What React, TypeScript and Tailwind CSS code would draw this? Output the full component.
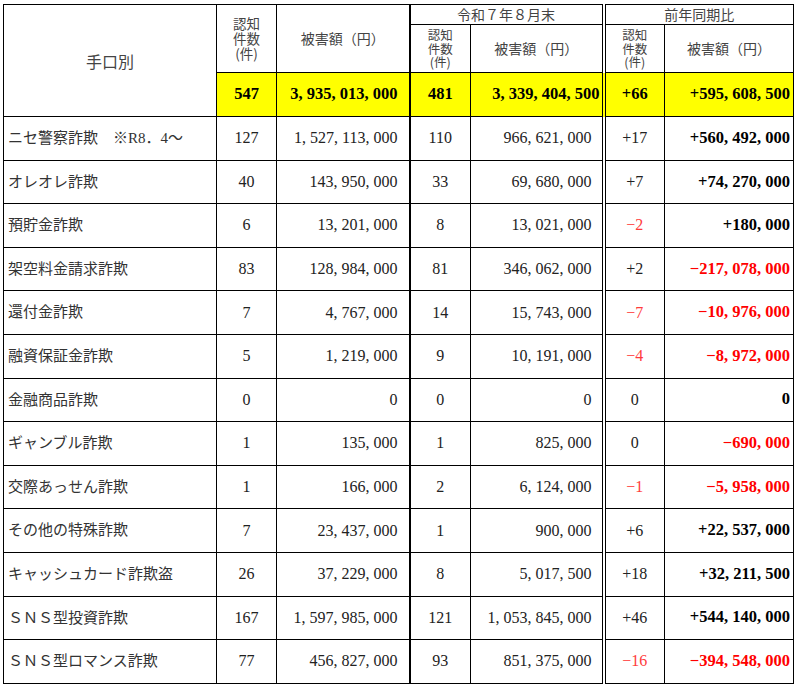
import React from "react";

type Row = [string, string, string, string, string, string, string];

const rows: Row[] = [
  ["ニセ警察詐欺　※R8．4～", "127", "1,527,113,000", "110", "966,621,000", "+17", "+560,492,000"],
  ["オレオレ詐欺", "40", "143,950,000", "33", "69,680,000", "+7", "+74,270,000"],
  ["預貯金詐欺", "6", "13,201,000", "8", "13,021,000", "−2", "+180,000"],
  ["架空料金請求詐欺", "83", "128,984,000", "81", "346,062,000", "+2", "−217,078,000"],
  ["還付金詐欺", "7", "4,767,000", "14", "15,743,000", "−7", "−10,976,000"],
  ["融資保証金詐欺", "5", "1,219,000", "9", "10,191,000", "−4", "−8,972,000"],
  ["金融商品詐欺", "0", "0", "0", "0", "0", "0"],
  ["ギャンブル詐欺", "1", "135,000", "1", "825,000", "0", "−690,000"],
  ["交際あっせん詐欺", "1", "166,000", "2", "6,124,000", "−1", "−5,958,000"],
  ["その他の特殊詐欺", "7", "23,437,000", "1", "900,000", "+6", "+22,537,000"],
  ["キャッシュカード詐欺盗", "26", "37,229,000", "8", "5,017,500", "+18", "+32,211,500"],
  ["ＳＮＳ型投資詐欺", "167", "1,597,985,000", "121", "1,053,845,000", "+46", "+544,140,000"],
  ["ＳＮＳ型ロマンス詐欺", "77", "456,827,000", "93", "851,375,000", "−16", "−394,548,000"],
];

// "1,527,113,000" -> "1, 527, 113, 000"
const fmt = (s: string) => s.replace(/,/g, ", ");
const neg = (s: string) => s.startsWith("−");

const cell = "border border-black p-0";
const num = "font-['Liberation_Serif',serif] text-[16px] text-[#222]";
const bold = "font-['Liberation_Serif',serif] text-[16.5px] font-bold";
const head = "font-['Noto_Sans_CJK_JP',sans-serif] text-[#444]";

function CountHead({ small }: { small?: boolean }) {
  return (
    <div className={`${head} ${small ? "text-[12.5px] leading-[13.5px]" : "text-[13.5px] leading-[15px]"}`}>
      <div>認知</div>
      <div>件数</div>
      <div>(件)</div>
    </div>
  );
}

export default function App() {
  return (
    <div className="bg-white min-h-screen pl-[3px] pt-[4px]">
      <table className="border-collapse border border-black table-fixed w-[790px]">
        <colgroup>
          <col className="w-[213px]" />
          <col className="w-[60px]" />
          <col className="w-[133px]" />
          <col className="w-[61px]" />
          <col className="w-[133px]" />
          <col className="w-[61px]" />
          <col className="w-[129px]" />
        </colgroup>
        <thead>
          <tr className="h-[20px]">
            <th rowSpan={3} className={`${cell} ${head} text-[16px] font-normal text-center`}>
              手口別
            </th>
            <th rowSpan={2} className={`${cell} font-normal text-center`}>
              <CountHead />
            </th>
            <th rowSpan={2} className={`${cell} ${head} text-[14px] font-normal text-center`}>
              被害額（円）
            </th>
            <th colSpan={2} className={`${cell} border-l-2 ${head} text-[14px] font-normal leading-[19px]`}>
              令和７年８月末
            </th>
            <th colSpan={2} className={`${cell} border-l-[4px] border-double ${head} text-[14px] font-normal leading-[19px]`}>
              前年同期比
            </th>
          </tr>
          <tr className="h-[48px]">
            <th className={`${cell} border-l-2 font-normal text-center`}>
              <CountHead small />
            </th>
            <th className={`${cell} ${head} text-[14px] font-normal text-center`}>被害額（円）</th>
            <th className={`${cell} border-l-[4px] border-double font-normal text-center`}>
              <CountHead small />
            </th>
            <th className={`${cell} ${head} text-[14px] font-normal text-center`}>被害額（円）</th>
          </tr>
          <tr className="h-[44px] bg-[#ffff00]">
            <td className={`${cell} ${bold} text-center`}>547</td>
            <td className={`${cell} ${bold} text-right pr-[11px]`}>{fmt("3,935,013,000")}</td>
            <td className={`${cell} border-l-2 ${bold} text-center`}>481</td>
            <td className={`${cell} ${bold} text-right pr-[2px]`}>{fmt("3,339,404,500")}</td>
            <td className={`${cell} border-l-[4px] border-double ${bold} text-center`}>+66</td>
            <td className={`${cell} ${bold} text-right pr-[3px]`}>{fmt("+595,608,500")}</td>
          </tr>
        </thead>
        <tbody>
          {rows.map((r) => (
            <tr key={r[0]} className="h-[43.6px]">
              <td className={`${cell} pl-[4px] font-['Liberation_Serif','Noto_Sans_CJK_JP',serif] text-[15px] text-[#333]`}>
                {r[0]}
              </td>
              <td className={`${cell} ${num} text-center`}>{r[1]}</td>
              <td className={`${cell} ${num} text-right pr-[11px]`}>{fmt(r[2])}</td>
              <td className={`${cell} border-l-2 ${num} text-center`}>{r[3]}</td>
              <td className={`${cell} ${num} text-right pr-[10px]`}>{fmt(r[4])}</td>
              <td
                className={`${cell} border-l-[4px] border-double font-['Liberation_Serif',serif] text-[16px] text-center ${
                  neg(r[5]) ? "text-[#ff3b3b]" : "text-[#222]"
                }`}
              >
                {r[5]}
              </td>
              <td
                className={`${cell} ${bold} text-right pr-[3px] ${neg(r[6]) ? "text-[#ff0000]" : "text-black"}`}
              >
                {fmt(r[6])}
              </td>
            </tr>
          ))}
        </tbody>
      </table>
    </div>
  );
}
